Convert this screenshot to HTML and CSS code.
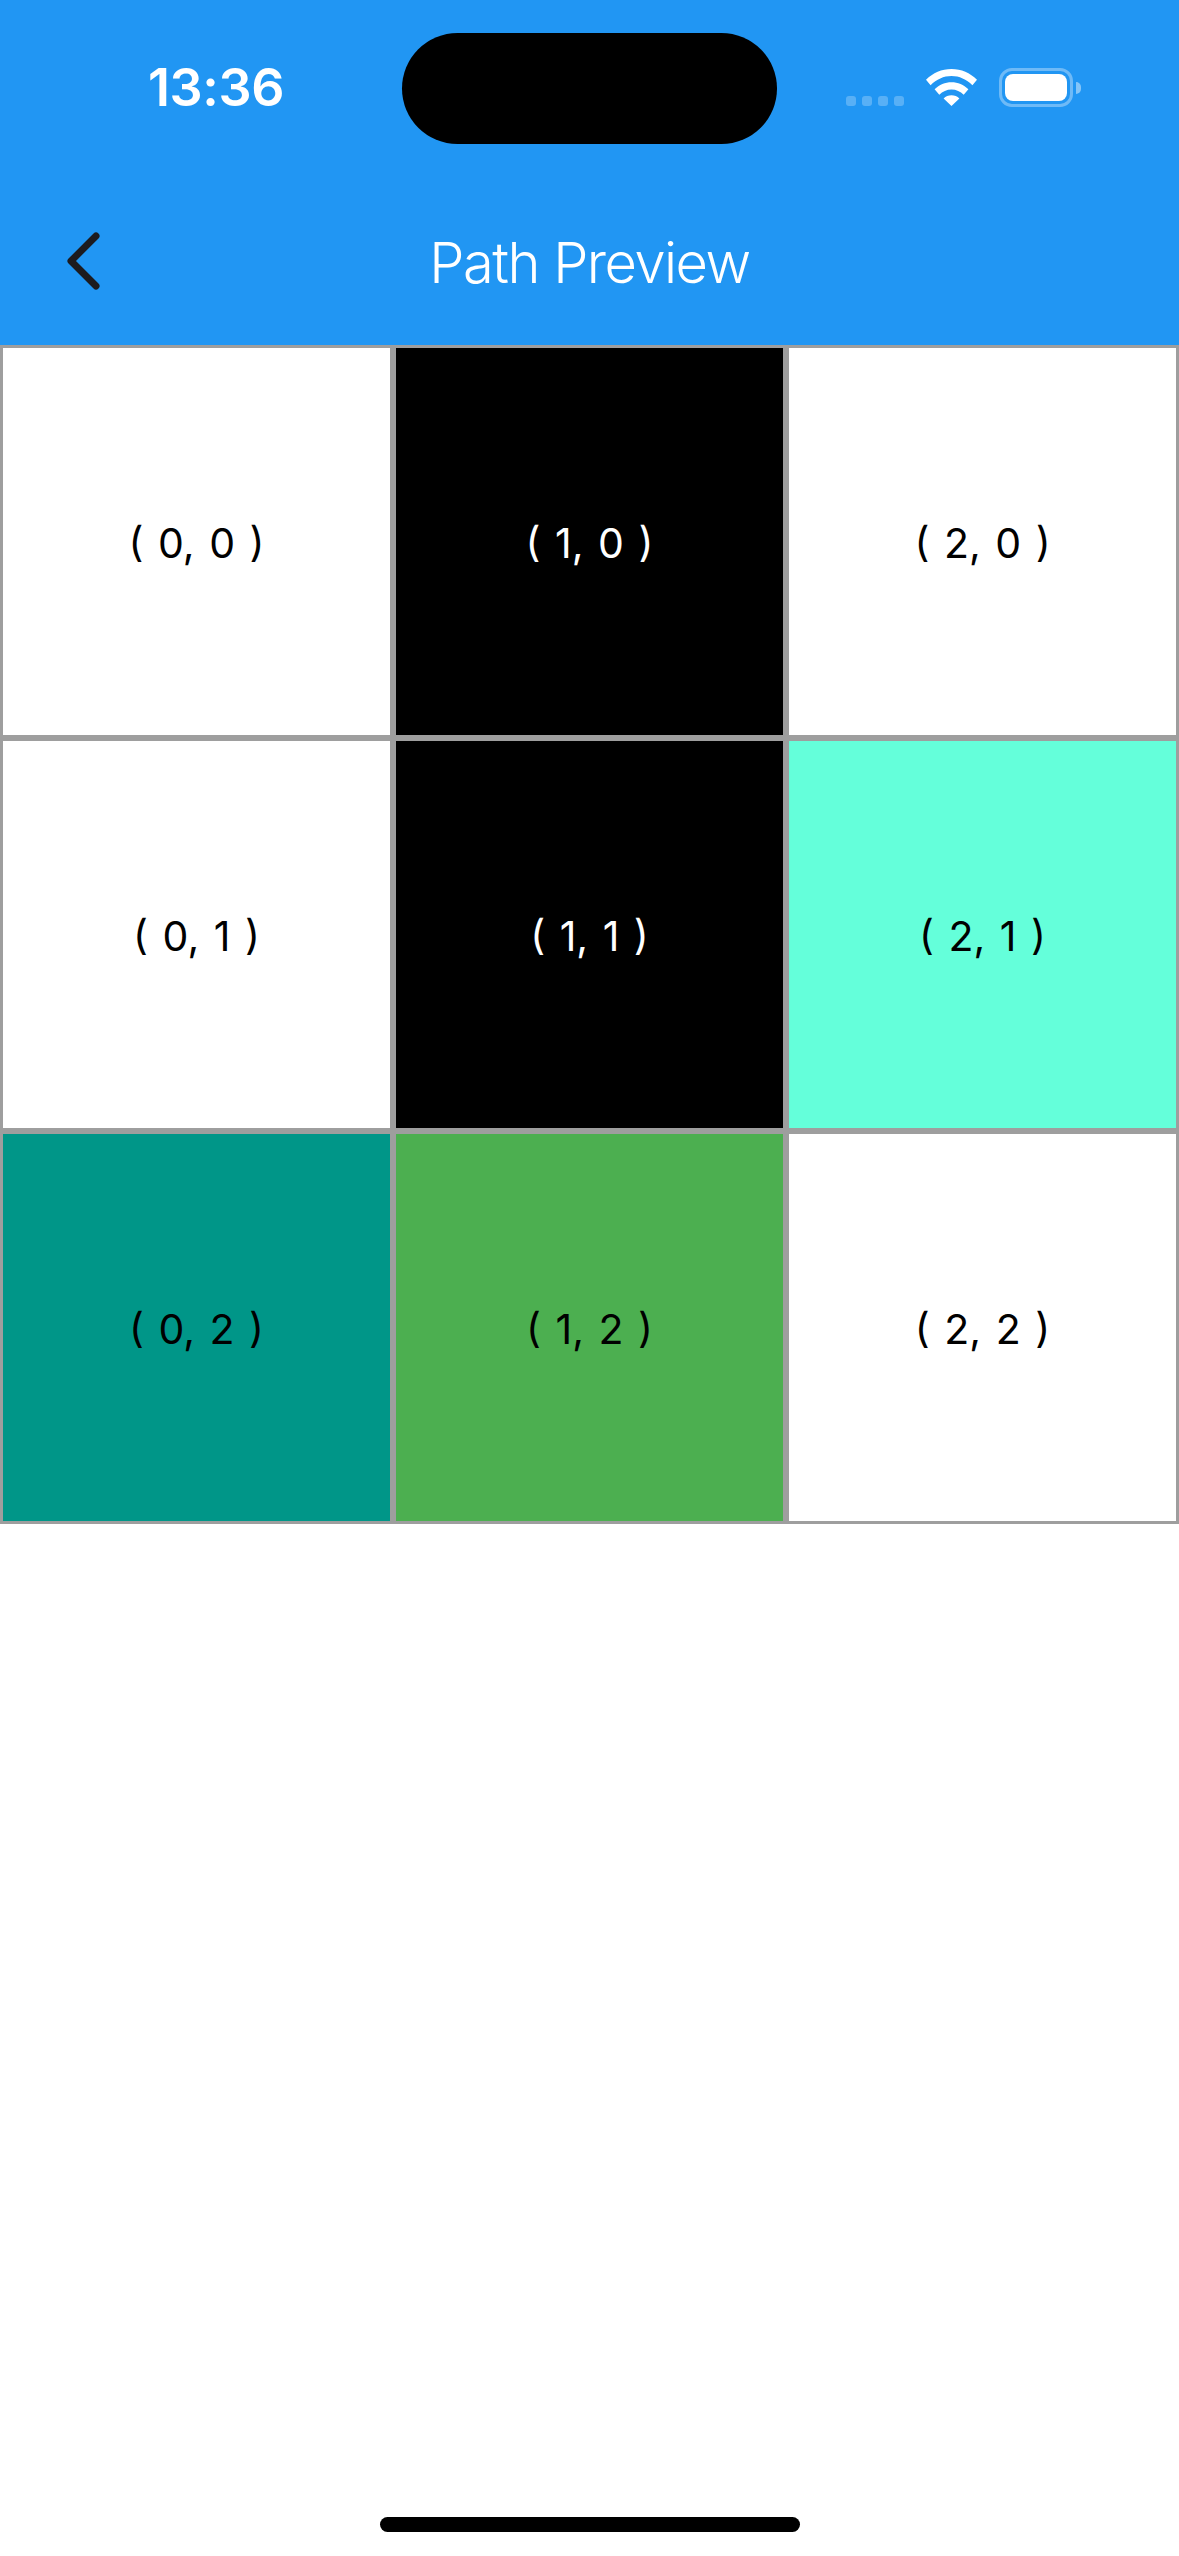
FILE: index.html
```html
<!DOCTYPE html>
<html lang="en">
<head>
<meta charset="utf-8">
<title>Path Preview</title>
<link rel="stylesheet" href="styles.css">
</head>
<body>
<div class="screen">
  <header class="header">
    <div class="status-bar">
      <span class="time">13:36</span>
      <div class="island"></div>
      <div class="status-icons">
        <div class="signal"><i></i><i></i><i></i><i></i></div>
        <svg class="wifi" viewBox="0 0 51 37" width="51" height="37">
          <path d="M25.5 0C15.6 0 7 3.9 0 10.7l4.6 5.5C10.6 10.3 17.6 7 25.5 7s14.900 3.300 20.900 9.200l4.600-5.500C44 3.900 35.400 0 25.500 0z" fill="#fff"/>
          <path d="M25.500 13.200c-6.400 0-12.200 2.600-16.900 7l4.700 5.500c3.300-3.200 7.500-5.200 12.200-5.200s8.900 2 12.200 5.200l4.700-5.500c-4.700-4.400-10.500-7-16.900-7z" fill="#fff"/>
          <path d="M25.500 26.200c-3 0-5.800 1.200-7.900 3.200l7.900 7.600 7.900-7.600c-2.100-2-4.900-3.200-7.900-3.200z" fill="#fff"/>
        </svg>
        <div class="battery">
          <div class="battery-body"><div class="battery-fill"></div></div>
          <div class="battery-cap"></div>
        </div>
      </div>
    </div>
    <div class="nav-bar">
      <svg class="back" viewBox="0 0 40 64" width="40" height="64">
        <path d="M33 7 8 32l25 25" fill="none" stroke="#1c1b1f" stroke-width="7" stroke-linecap="round" stroke-linejoin="round"/>
      </svg>
      <h1 class="title">Path Preview</h1>
    </div>
  </header>
  <main class="grid">
    <div class="cell">( 0, 0 )</div>
    <div class="cell black">( 1, 0 )</div>
    <div class="cell">( 2, 0 )</div>
    <div class="cell">( 0, 1 )</div>
    <div class="cell black">( 1, 1 )</div>
    <div class="cell aqua">( 2, 1 )</div>
    <div class="cell teal">( 0, 2 )</div>
    <div class="cell green">( 1, 2 )</div>
    <div class="cell">( 2, 2 )</div>
  </main>
  <div class="home-area"><div class="home-bar"></div></div>
</div>
</body>
</html>
```
FILE: styles.css
```css
* { box-sizing: border-box; }
html, body { margin: 0; padding: 0; background: #fff; }
.screen {
  width: 1179px;
  height: 2556px;
  display: flex;
  flex-direction: column;
  overflow: hidden;
  font-family: Inter, "Liberation Sans", sans-serif;
}
.header { background: #2196f3; height: 345px; display: flex; flex-direction: column; }
.status-bar {
  position: relative;
  height: 177px;
  display: flex;
  justify-content: space-between;
  align-items: flex-start;
  padding: 58px 98px 0 148px;
}
.time { color: #fff; font-size: 52px; font-weight: 600; line-height: 60px; letter-spacing: -0.4px; }
.island {
  position: absolute;
  left: 402px;
  top: 33px;
  width: 375px;
  height: 111px;
  border-radius: 56px;
  background: #000;
}
.status-icons { display: flex; align-items: flex-end; padding-top: 10px; }
.signal { display: flex; gap: 6px; margin-right: 22px; padding-bottom: 1px; }
.signal i { display: block; width: 10px; height: 10px; border-radius: 3px; background: rgba(255,255,255,.25); }
.wifi { margin-right: 22px; display: block; margin-bottom: 1px; }
.battery { display: flex; align-items: center; }
.battery-body {
  width: 74px;
  height: 39px;
  padding: 3px;
  border: 3px solid rgba(255,255,255,.35);
  border-radius: 13px;
}
.battery-fill { width: 100%; height: 100%; background: #fff; border-radius: 8px; }
.battery-cap {
  width: 5px;
  height: 12px;
  margin-left: 3px;
  background: rgba(255,255,255,.45);
  border-radius: 0 6px 6px 0;
}
.nav-bar { flex: 1; display: flex; align-items: flex-start; position: relative; padding: 52px 0 0 63px; }
.back { display: block; flex: none; }
.title {
  position: absolute;
  left: 0;
  right: 0;
  top: 53px;
  margin: 0;
  text-align: center;
  color: #fff;
  font-size: 56px;
  line-height: 66px;
  font-weight: 350;
  letter-spacing: -1.5px;
}
.grid { display: grid; grid-template-columns: repeat(3, 393px); grid-auto-rows: 393px; }
.cell {
  display: flex;
  align-items: center;
  justify-content: center;
  border: 3px solid #9e9e9e;
  background: #fff;
  color: #000;
  font-size: 41px;
  line-height: 50px;
  padding-top: 2px;
  word-spacing: 3px;
  white-space: pre;
}
.black { background: #000; color: #fff; }
.aqua { background: #64ffda; }
.teal { background: #009688; }
.green { background: #4caf50; }
.home-area { margin-top: auto; height: 39px; display: flex; justify-content: center; }
.home-bar { width: 420px; height: 15px; border-radius: 8px; background: #000; }
```
